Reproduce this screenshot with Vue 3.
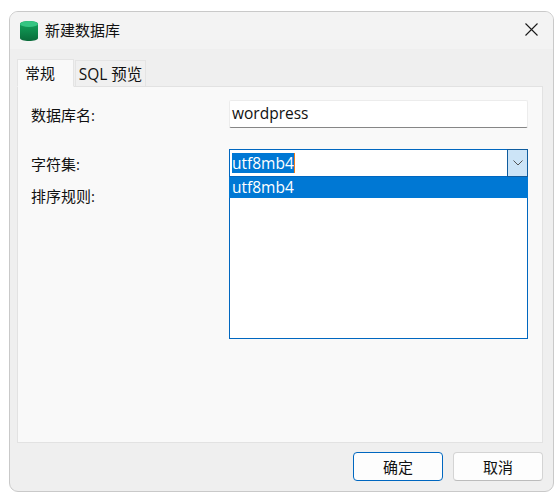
<script setup>
const tabs = [
  { label: '常规', active: true },
  { label: 'SQL 预览', active: false }
]
</script>

<template>
  <div class="page">
    <div class="window">
      <header class="titlebar">
        <svg class="logo" width="18" height="20" viewBox="0 0 18 20">
          <defs>
            <linearGradient id="dbBody" x1="0" y1="0" x2="0" y2="1">
              <stop offset="0" stop-color="#16a35f" />
              <stop offset="0.5" stop-color="#0e8a4c" />
              <stop offset="1" stop-color="#0a6b3a" />
            </linearGradient>
          </defs>
          <path d="M0 3C0 1.200 4 0 9 0s9 1.200 9 3v14c0 1.800-4 3-9 3s-9-1.200-9-3z" fill="url(#dbBody)" />
          <ellipse cx="9" cy="3" rx="9" ry="3" fill="#35c582" />
        </svg>
        <span class="title">新建数据库</span>
        <svg class="close" width="13" height="13" viewBox="0 0 13 13">
          <path d="M0.500 0.500l12 12M12.500 0.500l-12 12" stroke="#1a1a1a" stroke-width="1.100" fill="none" />
        </svg>
      </header>

      <div class="content">
        <nav class="tabs">
          <div v-for="tab in tabs" :key="tab.label" class="tab" :class="{ active: tab.active }">{{ tab.label }}</div>
        </nav>

        <section class="panel">
          <div class="row row-name">
            <label class="label">数据库名:</label>
            <div class="input">wordpress</div>
          </div>
          <div class="row row-charset">
            <label class="label">字符集:</label>
            <div class="combo">
              <span class="selected">utf8mb4</span>
              <span class="caret"></span>
              <div class="arrow">
                <svg width="10" height="6" viewBox="0 0 10 6">
                  <path d="M0.500 0.500L5 5l4.500-4.500" stroke="#555" stroke-width="1" fill="none" />
                </svg>
              </div>
              <div class="list">
                <div class="option">utf8mb4</div>
              </div>
            </div>
          </div>
          <div class="row row-collation">
            <label class="label">排序规则:</label>
          </div>
        </section>

        <footer class="footer">
          <button class="btn primary">确定</button>
          <button class="btn">取消</button>
        </footer>
      </div>
    </div>
  </div>
</template>

<style>
html, body { margin: 0; background: #fff; }
</style>

<style scoped>
.page {
  width: 560px;
  height: 501px;
  box-sizing: border-box;
  padding: 11px 6px 9px 9px;
  font-family: "Open Sans", "Noto Sans CJK SC", sans-serif;
  font-size: 15px;
  color: #111;
  overflow: hidden;
}
.window {
  width: 545px;
  height: 481px;
  box-sizing: border-box;
  border: 1px solid #c9c9c9;
  border-radius: 9px;
  background: #efefef;
  overflow: hidden;
  display: flex;
  flex-direction: column;
}
.titlebar {
  height: 37px;
  flex: none;
  background: #f3f3f3;
  display: flex;
  align-items: center;
  padding: 0 15px 2px 10px;
  box-sizing: border-box;
}
.logo { flex: none; margin-top: 2px; }
.title { margin-left: 7px; flex: 1; font-size: 15px; color: #111; }
.close { flex: none; }
.content {
  flex: 1;
  display: flex;
  flex-direction: column;
  padding: 10px 10px 9px 7px;
  min-height: 0;
}
.tabs {
  display: flex;
  align-items: flex-end;
  height: 28px;
  flex: none;
  margin-bottom: -1px;
  position: relative;
  z-index: 1;
}
.tab {
  box-sizing: border-box;
  height: 26px;
  width: 71px;
  margin-left: 1px;
  margin-bottom: 1px;
  border: 1px solid #e4e4e4;
  border-bottom: none;
  background: #f0f0f0;
  text-align: center;
  line-height: 26px;
  font-size: 15.500px;
  color: #111;
}
.tab.active {
  width: 57px;
  height: 28px;
  margin-left: 0;
  margin-bottom: 0;
  padding-right: 11px;
  background: #f9f9f9;
  border-bottom: 1px solid #f9f9f9;
  font-size: 15px;
  line-height: 26px;
}
.panel {
  box-sizing: border-box;
  width: 526px;
  height: 357px;
  flex: none;
  border: 1px solid #e2e2e2;
  background: #f9f9f9;
  padding: 13px 13px 0 13px;
}
.row { display: flex; }
.label {
  width: 198px;
  flex: none;
  font-size: 15px;
  line-height: 22px;
  color: #111;
}
.row-name { height: 28px; align-items: center; }
.row-name .label { padding-top: 2px; }
.input {
  box-sizing: border-box;
  width: 299px;
  height: 28px;
  background: #fff;
  border: 1px solid #ececec;
  border-bottom: 1px solid #868686;
  border-radius: 2px;
  padding-left: 2px;
  font-size: 15.500px;
  line-height: 25px;
  color: #111;
}
.row-charset { margin-top: 21px; height: 28px; align-items: center; }
.row-charset .label { padding-top: 2px; }
.combo {
  box-sizing: border-box;
  position: relative;
  width: 299px;
  height: 28px;
  background: #fff;
  border: 1px solid #0067c0;
  display: flex;
  align-items: center;
  padding-left: 2px;
}
.selected {
  background: #0078d4;
  color: #fff;
  font-size: 15.500px;
  line-height: 20px;
  height: 20px;
}
.caret { width: 1px; height: 20px; background: #f07a1a; }
.arrow {
  box-sizing: border-box;
  position: absolute;
  right: -1px;
  top: -1px;
  width: 21px;
  height: 28px;
  background: #cce4f7;
  border: 1px solid #0f5c9e;
  display: flex;
  align-items: center;
  justify-content: center;
}
.list {
  box-sizing: border-box;
  position: absolute;
  left: -1px;
  top: 27px;
  width: 299px;
  height: 162px;
  background: #fff;
  border: 1px solid #0067c0;
  border-top: none;
}
.option {
  margin-left: -1px;
  margin-right: -1px;
  height: 21px;
  background: #0078d4;
  color: #fff;
  padding-left: 3px;
  font-size: 15.500px;
  line-height: 21px;
}
.row-collation { margin-top: 8px; }
.footer {
  display: flex;
  justify-content: flex-end;
  gap: 10px;
  margin-top: 9px;
}
.btn {
  box-sizing: border-box;
  width: 90px;
  height: 29px;
  background: #fdfdfd;
  border: 1px solid #d4d4d4;
  border-bottom-color: #bcbcbc;
  border-radius: 4px;
  padding: 0;
  font-family: "Noto Sans CJK SC", sans-serif;
  font-size: 15px;
  color: #111;
}
.btn.primary { border: 1px solid #0067c0; }
</style>
